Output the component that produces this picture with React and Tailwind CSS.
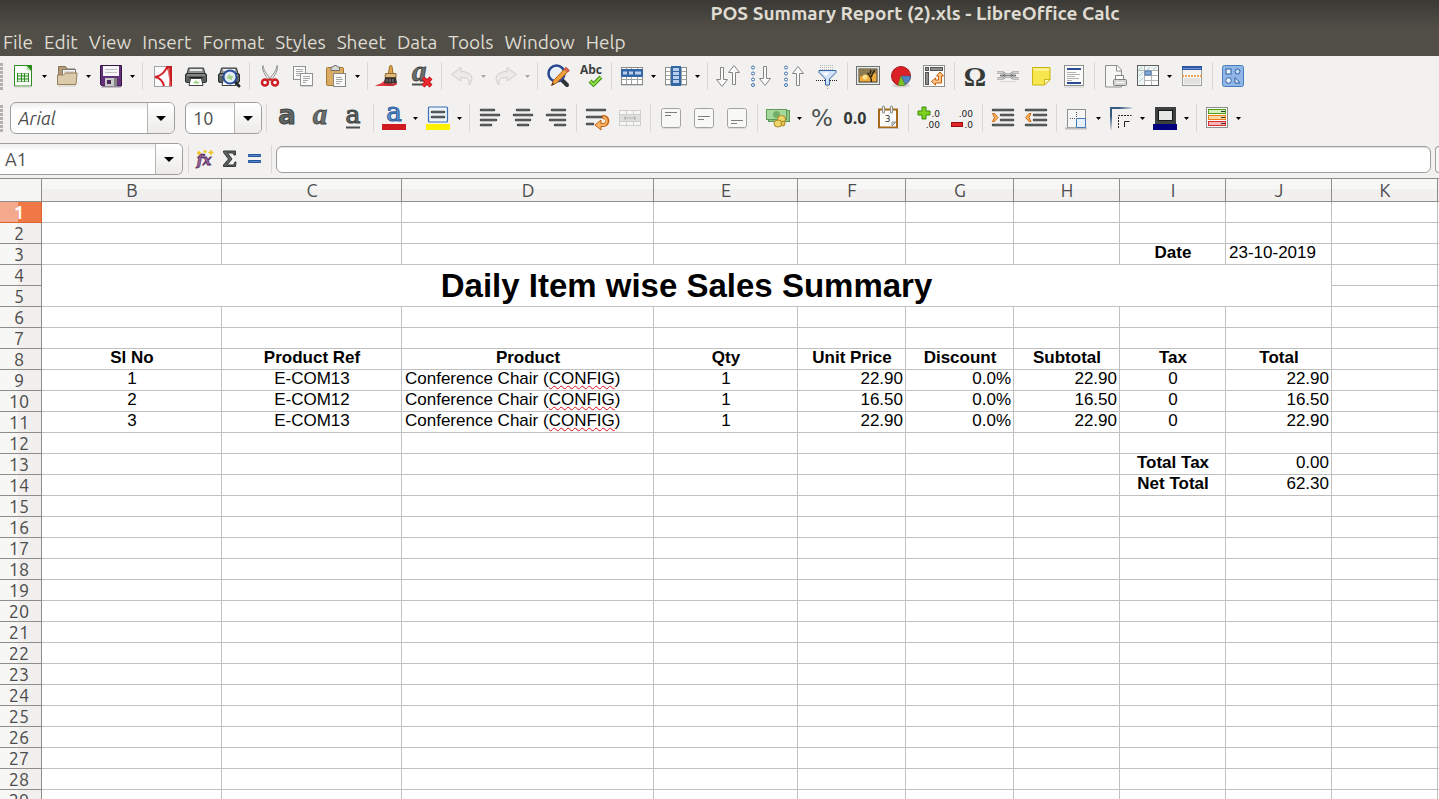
import React from "react";

const Svg = ({ children }) => (
  <svg viewBox="0 0 24 24" className="size-6 shrink-0 overflow-visible" aria-hidden="true">
    {children}
  </svg>
);

const sans = "'DejaVu Sans', sans-serif";
const serif = "'DejaVu Serif', serif";
const roman = "'Liberation Serif', serif";

const lines = (rows) =>
  rows.map(([x1, x2, y], i) => (
    <g key={i} strokeLinecap="round">
      <path d={`M${x1} ${y}H${x2}`} stroke="#3a3f3e" strokeWidth="2.500" />
      <path d={`M${x1} ${y}H${x2}`} stroke="#7d8280" strokeWidth=".8" />
    </g>
  ));

const printer = (
  <>
    <path d="M4.500 4h15l1.500 6H3z" fill="#8f9391" stroke="#2f3332" />
    <path d="M6 6h12" stroke="#e9ebea" strokeWidth="2" />
    <rect x="1.500" y="9.500" width="21" height="9" rx="1.500" fill="#5b605e" stroke="#2b2f2e" />
    <path d="M3 11h18" stroke="#a9adab" strokeWidth="1" />
    <path d="M5 14h14v-1H5z" fill="#1d201f" />
    <path d="M6.500 14.500h11l1.500 7H5z" fill="#fff" stroke="#3c403e" />
    <path d="M9 19l3-3 1 2 3-1-2 3z" fill="#a4d48b" />
  </>
);

const sheetGrid = (
  <>
    <rect x="1.500" y="3.500" width="21" height="17" fill="#fff" stroke="#8a8d8a" />
    <path d="M2 7.500h20M2 11.500h20M2 15.500h20M6.500 4v16M11.500 4v16M17.500 4v16" stroke="#a0a3a0" />
    <path d="M1 21.500h22" stroke="#cfcfcd" />
  </>
);

const alignBox = (y) => (
  <>
    <rect x="2.500" y="2.500" width="19" height="19" rx="2" fill="#f8f8f7" stroke="#a2a4a2" />
    <path d="M3.500 22.500h17" stroke="#dcdcda" />
    <path d={`M6 ${y}.500h12M6 ${y + 3}.500h6`} stroke="#7c7f7c" />
  </>
);

const arrowDown = "M4.500 2.500v12H.5L6 21.500l5.500-7H7.500v-12z";
const arrowUp = "M4.500 21.500v-12H.5L6 2.500l5.500 7H7.500v12z";
const dots = [3.5, 9.5, 15.5, 21].map((y) => (
  <circle key={y} cx="4" cy={y} r="1.500" fill="#fff" stroke="#3d70b0" />
));

const Icons = {
  new: (
    <>
      <path d="M3.500 1.500h13l4 4.500v16h-17z" fill="#fcfdfc" stroke="#2f8a22" />
      <path d="M15 1h6v7z" fill="#2a8a1c" />
      <path d="M15.500 2l4.500 5-4.500-1z" fill="#b9e3a9" />
      <rect x="6" y="9" width="12" height="9" fill="#2f8a22" />
      <path d="M7 10.500h3M11 10.500h2M14 10.500h3M7 13.500h3M11 13.500h2M14 13.500h3M7 16.500h3M11 16.500h2M14 16.500h3" stroke="#e8f7e3" strokeWidth="2" />
      <path d="M4 23h16" stroke="#cfd3ce" />
    </>
  ),
  open: (
    <>
      <path d="M3.500 19V2.500h7l2 2.500h7.500v5" fill="#b49a78" stroke="#8a7350" />
      <path d="M7.500 11V5.500h13V11" fill="#f7f7f5" stroke="#74776f" />
      <path d="M9 8h10" stroke="#b9bab5" />
      <path d="M2.500 20.500v-9.500h6l2-2h11.500l-1 11.500z" fill="#dccbaa" stroke="#977f5b" />
      <path d="M3 22h18" stroke="#cfccc6" />
    </>
  ),
  save: (
    <>
      <path d="M1.500 1.500h21v20.500H3l-1.500-1.500z" fill="#63307a" stroke="#361545" />
      <rect x="4" y="2" width="16" height="10" fill="#f6f5f7" />
      <path d="M6 5.500h12M6 8.500h12" stroke="#c4c2c6" />
      <rect x="6" y="14" width="12" height="8" fill="#c9cbc9" />
      <path d="M15 14h3v8h-3z" fill="#828583" />
      <rect x="8" y="16" width="4" height="4" fill="#4a2a5a" />
      <path d="M2 23.500h20" stroke="#c5c2c6" />
    </>
  ),
  pdf: (
    <>
      <rect x="3.500" y="2.500" width="17" height="20" fill="#fbfbfb" stroke="#a1a3a1" />
      <path d="M15 2h6v20h-3c1-7 0-13-3-20z" fill="#c81c22" />
      <path d="M16 3c-2 5-6 9-12 10 5 1 8 4 9 9" fill="none" stroke="#d21f26" strokeWidth="2" />
      <path d="M18 4c-1 5 1 12 1 18" stroke="#f08a8a" fill="none" />
    </>
  ),
  print: printer,
  preview: (
    <>
      {printer}
      <path d="M17 17l5 5" stroke="#26282a" strokeWidth="3" strokeLinecap="round" />
      <circle cx="13" cy="13" r="6.500" fill="#e4eef5" stroke="#2b4f9c" strokeWidth="2" />
      <path d="M9.500 14l3-4 1 2 3 0-2 4z" fill="#a3d487" />
    </>
  ),
  cut: (
    <>
      <path d="M5 1.500c0 4 4 9 8 14l-2 1C7 11 3.500 6 5 1.500z" fill="#f4f4f3" stroke="#8c8f8c" />
      <path d="M19 1.500c0 4-4 9-8 14l2 1c4-5.500 7.500-10.500 6-15z" fill="#f4f4f3" stroke="#8c8f8c" />
      <circle cx="7" cy="18.500" r="3" fill="#fff" stroke="#cc1f24" strokeWidth="2.500" />
      <circle cx="17" cy="18.500" r="3" fill="#fff" stroke="#cc1f24" strokeWidth="2.500" />
      <path d="M10 15.500h4" stroke="#cc1f24" strokeWidth="2" />
    </>
  ),
  copy: (
    <>
      <rect x="2.500" y="2.500" width="12" height="13" fill="#fbfbfb" stroke="#8f928f" />
      <path d="M5 5.500h7M5 7.500h7M5 9.500h5M5 11.500h6" stroke="#a5a8a5" />
      <rect x="9.500" y="9.500" width="12" height="12" fill="#fbfbfb" stroke="#8f928f" />
      <path d="M12 12.500h7M12 14.500h7M12 16.500h5M12 18.500h3" stroke="#a5a8a5" />
      <path d="M10 22.500h12" stroke="#d0d0ce" />
    </>
  ),
  paste: (
    <>
      <rect x="2.500" y="3.500" width="17" height="18" rx="1" fill="#dbab62" stroke="#a5762f" />
      <path d="M7 6.500V3h2l1-1.500h2.500L13.500 3h2v3.500z" fill="#d7d9d7" stroke="#6e716e" />
      <rect x="9.500" y="9.500" width="12" height="13" fill="#fbfbfb" stroke="#868986" />
      <path d="M12 13.500h6M12 15.500h7M12 17.500h6M12 19.500h4" stroke="#a5a8a5" />
    </>
  ),
  brush: (
    <>
      <path d="M-1 22c3-2 7-2 10-6l10 5c-1 1-4 1-6 1z" fill="#e23a40" />
      <path d="M12.500 10l1-7.500c.5-1.500 2-1.500 2.500 0l1 7.500z" fill="#e3a74b" stroke="#9a6619" />
      <path d="M9.500 9.500h10.500v4H9z" fill="#e0ba7d" stroke="#8d6b32" />
      <path d="M9 13.500h11l1 6H8z" fill="#33302f" />
      <path d="M8.500 19.500c3 2 9 2 12 0" stroke="#c8262c" strokeWidth="2" fill="none" />
      <path d="M11 15v3M14 15v3M17 15v3" stroke="#8d8a88" />
    </>
  ),
  clear: (
    <>
      <text x="3" y="17" fontFamily={roman} fontStyle="italic" fontWeight="700" fontSize="29" fill="#6a6f6d" stroke="#3a3e3d" strokeWidth=".8">a</text>
      <path d="M3 20.500h11" stroke="#4e5351" strokeWidth="2" />
      <path d="M14 14l8 8M22 14l-8 8" stroke="#a5070b" strokeWidth="4" />
      <path d="M14 14l8 8M22 14l-8 8" stroke="#f02b2f" strokeWidth="2.500" />
    </>
  ),
  undo: <path d="M11 3.500l-9.500 7 9.500 6.500v-3.500c6 0 9 1 8 7.500 5-6 4-13-8-13.500z" fill="#eceae8" stroke="#cfcdca" />,
  redo: <path d="M13 3.500l9.500 7-9.500 6.500v-3.500c-6 0-9 1-8 7.500-5-6-4-13 8-13.500z" fill="#eceae8" stroke="#cfcdca" />,
  find: (
    <>
      <path d="M15 15l6 6" stroke="#303335" strokeWidth="4" strokeLinecap="round" />
      <circle cx="10.500" cy="9.500" r="8" fill="#e9f0f7" stroke="#27468f" strokeWidth="2.500" />
      <path d="M5.500 21.500l2-5L20 3.500l3 3L10.500 19z" fill="#f0a13c" stroke="#b35d12" />
      <path d="M18.500 5l1.500-1.500 3 3L21.500 8z" fill="#e4716b" stroke="#b8423c" />
      <path d="M5.500 21.500l1-3 2 2z" fill="#4a3420" />
    </>
  ),
  spell: (
    <>
      <text x="12" y="10" textAnchor="middle" fontFamily="'Open Sans', sans-serif" fontWeight="700" fontSize="12" fill="#3b3f3e">Abc</text>
      <path d="M11 17l3.500 3.500L22 13" fill="none" stroke="#3f8a12" strokeWidth="4" />
      <path d="M11 17l3.500 3.500L22 13" fill="none" stroke="#8fe04a" strokeWidth="2" />
    </>
  ),
  row: (
    <>
      {sheetGrid}
      <rect x="1" y="5" width="22" height="8" fill="#3465a4" />
      <path d="M3 9h4M9 9h4M15 9h6" stroke="#b8d0ee" strokeWidth="3" />
    </>
  ),
  col: (
    <>
      {sheetGrid}
      <rect x="7" y="2" width="10" height="20" fill="#3465a4" />
      <path d="M9 5.500h6M9 9.500h6M9 13.500h6M9 17.500h6" stroke="#b8d0ee" strokeWidth="3" />
    </>
  ),
  sort: (
    <>
      <path d={arrowDown} fill="#fafafa" stroke="#858885" transform="translate(0 1)" />
      <path d={arrowUp} fill="#fafafa" stroke="#858885" transform="translate(12 -1)" />
    </>
  ),
  asc: (
    <>
      {dots}
      <path d={arrowDown} fill="#fafafa" stroke="#858885" transform="translate(10 0)" />
    </>
  ),
  desc: (
    <>
      {dots}
      <path d={arrowUp} fill="#fafafa" stroke="#858885" transform="translate(10 0)" />
    </>
  ),
  filter: (
    <>
      <path d="M5 1.500h14M5 3.500h14M5 5.500h14" stroke="#b9bbb9" strokeDasharray="1 1" />
      <path d="M1 16.500h22" stroke="#222" strokeDasharray="1 1" />
      <path d="M4 6.500h17v2l-6.500 6.500v6h-4v-6L4 8.500z" fill="#cfe2f6" stroke="#3465a4" />
      <path d="M7 8.500h7l-3 4z" fill="#fff" />
      <path d="M12.500 22v3" stroke="#9a9c9a" strokeDasharray="1 1" />
    </>
  ),
  image: (
    <>
      <rect x=".5" y="2.500" width="23" height="18" fill="#e9eae8" stroke="#6f736f" />
      <rect x="3" y="5" width="18" height="13" fill="#f0ab3d" stroke="#3f3c32" />
      <path d="M3.500 5.500h17v4c-5 0-9 2-17 3z" fill="#8d7a52" />
      <circle cx="9" cy="13" r="2.500" fill="#fbe08a" />
      <path d="M15.500 18c0-4-1-6-4-9M15.500 13c0-3 2-4 3-7M14 10l1-4" stroke="#2e2413" strokeWidth="1.500" fill="none" />
    </>
  ),
  pie: (
    <>
      <ellipse cx="12" cy="21.500" rx="9" ry="2" fill="#d5d4d2" />
      <circle cx="12" cy="12" r="9.500" fill="#dc2126" stroke="#a8161a" />
      <path d="M12 12h9.500a9.500 9.500 0 0 1-5.500 8.600z" fill="#4f83c4" stroke="#2f5b96" strokeWidth=".5" />
      <path d="M12 12l4 9a9.500 9.500 0 0 1-7 0z" fill="#7cc42e" stroke="#4d8a14" strokeWidth=".5" />
    </>
  ),
  pivot: (
    <>
      <rect x="1.500" y="1.500" width="21" height="21" fill="#fbfbfa" stroke="#8d908d" />
      <rect x="3.500" y="3.500" width="3" height="3" fill="#8d908d" stroke="#555" />
      <rect x="8.500" y="3.500" width="12" height="3" fill="#8d908d" stroke="#555" />
      <rect x="3.500" y="8.500" width="3" height="12" fill="#8d908d" stroke="#555" />
      <path d="M9.500 17.500l4-3.500v2h3v-4h-2l3.500-4 3.500 4h-2v7h-6v2z" fill="#fbc58a" stroke="#c8610c" />
    </>
  ),
  omega: <text x="12" y="22" textAnchor="middle" fontFamily={roman} fontWeight="700" fontSize="28" fill="#363b3a">Ω</text>,
  link: (
    <>
      <path d="M1 8.500h6l3 2h4l3-2h6M1 14.500h6l3-2h4l3 2h6M4 11.500h5M15 11.500h5" stroke="#7b7f7c" strokeWidth="2" fill="none" />
      <path d="M1 8.500h6l3 2h4l3-2h6M1 14.500h6l3-2h4l3 2h6" stroke="#e4e5e3" strokeWidth=".8" fill="none" />
      <path d="M4 17.500h16" stroke="#d8d7d5" />
    </>
  ),
  note: (
    <>
      <path d="M3.500 3.500h17.500v12l-5.500 5.500h-12z" fill="#f8e64f" stroke="#cdb413" />
      <path d="M4.500 4.500h15.500v2H4.500z" fill="#fdf6a8" />
      <path d="M15.500 21v-5.500H21z" fill="#fffbd0" stroke="#cdb413" />
    </>
  ),
  headfoot: (
    <>
      <rect x="2.500" y="1.500" width="19" height="20" fill="#fbfbfa" stroke="#8d908d" />
      <path d="M5 5h14M5 19h14" stroke="#2c4c92" strokeWidth="2" />
      <path d="M5 8.500h9M5 10.500h13M5 12.500h8M5 14.500h12M5 16.500h5" stroke="#b2b4b2" />
      <path d="M2 23h20" stroke="#cfcfcd" />
    </>
  ),
  printarea: (
    <>
      <path d="M2.500 1.500h12l4 4.500v17h-16z" fill="#f6f6f5" stroke="#8d908d" />
      <path d="M13.500 1.500v5.500h5" fill="#fff" stroke="#8d908d" />
      <path d="M12.500 16v-4.500h8V16" fill="#fff" stroke="#7f827f" />
      <rect x="10.500" y="15.500" width="13" height="6" rx="1" fill="#d5d7d5" stroke="#7f827f" />
      <path d="M13 18.500h8" stroke="#fff" />
    </>
  ),
  freeze: (
    <>
      <rect x="1.500" y="1.500" width="21" height="20" fill="#fff" />
      <path d="M2 2h20v5H2zM2 7h6v14H2z" fill="#eef5f6" />
      <path d="M3 6l3-3M3 12l4-4M3 18l4-4M11 6l3-3M17 6l3-3" stroke="#a9cbc9" />
      <path d="M8.500 2v19M15.500 7v14M2 6.500h20M8 11.500h14M8 16.500h14" stroke="#b4b7b4" />
      <rect x="9" y="7" width="6" height="4" fill="#86abd8" stroke="#3b6aa8" strokeWidth=".8" />
      <rect x="1.500" y="1.500" width="21" height="20" fill="none" stroke="#5c5f5c" />
    </>
  ),
  split: (
    <>
      <rect x="2.500" y="2.500" width="19" height="19" fill="#f4f4f3" stroke="#9a9d9a" />
      <rect x="2" y="2" width="20" height="4" fill="#2f56a3" />
      <path d="M3 4.500h18" stroke="#6d94d4" />
      <path d="M2 12h20" stroke="#ee8a2a" strokeWidth="1.500" strokeDasharray="2 1" />
      <path d="M4 14h16v6H4z" fill="#e2e2e0" />
    </>
  ),
  shapes: (
    <>
      <rect x="1.500" y="1.500" width="21" height="21" rx="2" fill="#8fb6e6" stroke="#4a7dbd" />
      <rect x="5" y="5" width="5" height="5" fill="#e8f1fb" stroke="#2f5fa0" />
      <circle cx="16.500" cy="7.500" r="2.500" fill="#c3d9f3" stroke="#2f5fa0" />
      <circle cx="7.500" cy="16.500" r="2.800" fill="#e8f1fb" stroke="#2f5fa0" />
      <path d="M14 13.500l5 5.500h-5z" fill="#e8f1fb" stroke="#2f5fa0" />
    </>
  ),
  bold: <text x="12" y="18" textAnchor="middle" fontFamily={sans} fontWeight="700" fontSize="26" fill="#626765" stroke="#3c4140" strokeWidth="1">a</text>,
  italic: <text x="12" y="18" textAnchor="middle" fontFamily={roman} fontStyle="italic" fontWeight="700" fontSize="29" fill="#6a6f6d" stroke="#3f4443" strokeWidth=".8">a</text>,
  underline: (
    <>
      <text x="12" y="17" textAnchor="middle" fontFamily={serif} fontSize="25" fill="#6a6f6d" stroke="#454a49" strokeWidth="1.200">a</text>
      <path d="M5 21.500h14" stroke="#4a4f4e" strokeWidth="2" />
    </>
  ),
  fontcolor: (
    <>
      <text x="12" y="15" textAnchor="middle" fontFamily={serif} fontSize="26" fill="#6d9fdb" stroke="#3465a4" strokeWidth="1.200">a</text>
      <rect x="0" y="18" width="24" height="6" fill="#cf1b20" />
    </>
  ),
  highlight: (
    <>
      <rect x="2.500" y="1" width="19" height="15" rx="1" fill="#eef4fb" stroke="#3a6fb5" strokeWidth="1.200" />
      {lines([[6, 18, 6], [6, 18, 11]])}
      <rect x="0" y="18" width="24" height="6" fill="#fff200" />
    </>
  ),
  left: lines([[3, 16, 4], [3, 21, 9], [3, 18, 14], [3, 13, 19]]),
  center: lines([[6, 18, 4], [3, 21, 9], [5, 19, 14], [7, 17, 19]]),
  right: lines([[8, 21, 4], [3, 21, 9], [6, 21, 14], [11, 21, 19]]),
  wrap: (
    <>
      {lines([[2, 20, 4], [2, 16, 11], [2, 8, 18]])}
      <path d="M17 11c7-1 7 8 1 8h-3" fill="none" stroke="#c4620e" strokeWidth="4" />
      <path d="M16 14l-6 5 6 5z" fill="#f9b66b" stroke="#c4620e" />
      <path d="M18 11.200c5-.2 5 7.800 0 7.800h-3" fill="none" stroke="#f9b66b" strokeWidth="2" />
    </>
  ),
  merge: (
    <>
      <rect x="1.500" y="4.500" width="21" height="15" fill="#f6f6f5" stroke="#cfcfcd" />
      <path d="M2 8.500h20M2 15.500h20M8.500 5v4M15.500 5v4M8.500 15v4M15.500 15v4" stroke="#cfcfcd" />
      <rect x="2" y="9" width="20" height="6" fill="#dededc" />
      <path d="M6 12h12M8 10l-2 2 2 2M16 10l2 2-2 2" stroke="#b2b4b2" fill="none" />
    </>
  ),
  top: alignBox(6),
  middle: alignBox(10),
  bottom: alignBox(14),
  currency: (
    <>
      <rect x="2.500" y="4.500" width="21" height="11" fill="#8fc687" stroke="#5c9a55" />
      <rect x=".5" y="3.500" width="20" height="10" fill="#a6d89e" stroke="#5c9a55" />
      <circle cx="10.500" cy="8.500" r="3.500" fill="#72b069" />
      <ellipse cx="15.500" cy="13" rx="4" ry="3.500" fill="#f0d56f" stroke="#a98a1e" />
      <ellipse cx="12" cy="17.500" rx="4" ry="3.500" fill="#f0d56f" stroke="#a98a1e" />
      <ellipse cx="17" cy="17.500" rx="2" ry="2.500" fill="#e3c450" stroke="#a98a1e" />
    </>
  ),
  percent: <text x="12" y="20" textAnchor="middle" fontFamily={sans} fontSize="23" fill="#4b504f">%</text>,
  decimal: <text x="12" y="18" textAnchor="middle" fontFamily="'Open Sans', sans-serif" fontWeight="700" fontSize="16" fill="#343837">0.0</text>,
  date: (
    <>
      <rect x="3" y="3.500" width="18" height="18" fill="#fbfbfa" stroke="#a8691a" strokeWidth="2" />
      <path d="M3 22.500h20" stroke="#c7c6c4" />
      <path d="M7.500 1v5M15.500 1v5" stroke="#8b8e8b" strokeWidth="3" strokeLinecap="round" />
      <path d="M7.500 1v5M15.500 1v5" stroke="#f3f3f2" strokeLinecap="round" />
      <text x="11.500" y="16" textAnchor="middle" fontFamily={sans} fontSize="9" fill="#333">3</text>
      <path d="M16 20v-4h4z" fill="#d2d2d0" stroke="#90938f" />
    </>
  ),
  adddec: (
    <>
      <path d="M5 1h4v4h4v4H9v4H5V9H1V5h4z" fill="#7fd11f" stroke="#3c8a0b" />
      <text x="23" y="11" textAnchor="end" fontFamily={sans} fontSize="9" fill="#222">.0</text>
      <text x="23" y="22" textAnchor="end" fontFamily={sans} fontSize="9" fill="#222">.00</text>
    </>
  ),
  deldec: (
    <>
      <text x="23" y="11" textAnchor="end" fontFamily={sans} fontSize="9" fill="#222">.00</text>
      <text x="23" y="22" textAnchor="end" fontFamily={sans} fontSize="9" fill="#222">.0</text>
      <rect x="1.500" y="16.500" width="11" height="4" fill="#e0252b" stroke="#9c0d12" />
    </>
  ),
  indent: (
    <>
      {lines([[2, 22, 4], [10, 22, 9], [10, 22, 14], [2, 22, 19]])}
      <path d="M1.500 7.500h2l3.500 4-3.500 4h-2l2-4z" fill="#fbb45f" stroke="#cf6a10" />
    </>
  ),
  outdent: (
    <>
      {lines([[2, 22, 4], [10, 22, 9], [10, 22, 14], [2, 22, 19]])}
      <path d="M7 7.500H5l-3.500 4 3.500 4h2l-2-4z" fill="#fbb45f" stroke="#cf6a10" />
    </>
  ),
  borders: (
    <>
      <rect x="2.500" y="3.500" width="18" height="18" fill="#f5f6f5" stroke="#8d908d" />
      <path d="M0 22.500h22" stroke="#bdbdbb" strokeWidth="2" />
      <path d="M11.500 6v6M5 12.500h6" stroke="#555" strokeDasharray="1 1" />
      <path d="M11.500 12.500h9v9h-9z" fill="#e6effa" stroke="#4478bd" />
    </>
  ),
  borderstyle: (
    <>
      <defs>
        <linearGradient id="fadeRight" gradientUnits="userSpaceOnUse" x1="10" y1="0" x2="23" y2="0">
          <stop stopColor="#35597f" />
          <stop offset="1" stopColor="#35597f" stopOpacity=".15" />
        </linearGradient>
        <linearGradient id="fadeDown" gradientUnits="userSpaceOnUse" x1="0" y1="10" x2="0" y2="24">
          <stop stopColor="#35597f" />
          <stop offset="1" stopColor="#35597f" stopOpacity=".1" />
        </linearGradient>
      </defs>
      <path d="M1 1h22v2H1z" fill="url(#fadeRight)" />
      <path d="M1 3h2v21H1z" fill="url(#fadeDown)" />
      <path d="M9.500 22V9.500h13" fill="none" stroke="#222" strokeDasharray="2 1" />
      <path d="M15.500 21v-5.500h5" fill="none" stroke="#222" />
    </>
  ),
  bordercolor: (
    <>
      <rect x="3.500" y="2.500" width="18" height="14" fill="#e6e8e6" stroke="#3c4140" strokeWidth="3" />
      <rect x="5.500" y="4.500" width="14" height="10" fill="none" stroke="#151717" />
      <rect x="0" y="18" width="24" height="6" fill="#00007f" />
    </>
  ),
  conditional: (
    <>
      <rect x="1.500" y="1.500" width="21" height="20" fill="#fbfbfa" stroke="#8d908d" />
      <rect x="3.500" y="3.500" width="17" height="4" fill="#d3f0bd" stroke="#4f9f1b" />
      <rect x="3.500" y="9.500" width="17" height="4" fill="#fbd7a6" stroke="#e97f10" />
      <rect x="3.500" y="15.500" width="17" height="4" fill="#f5b5b5" stroke="#d92b2f" />
      <path d="M16 5.500h4M16 11.500h4M16 17.500h4" stroke="#333" />
    </>
  ),
  fx: (
    <>
      <text x="11" y="18" textAnchor="middle" fontFamily={serif} fontStyle="italic" fontWeight="700" fontSize="14" fill="#9a6aa0" stroke="#5a2d62" strokeWidth=".8">fx</text>
      <path d="M6 4v4M4 6h4M12 3v3M10.500 4.500h3M18 3v5M15.500 5.500h5" stroke="#edc21b" strokeWidth="1.500" />
    </>
  ),
  sum: <path d="M5.500 4h12v4H16l-1-2H9.500l4.500 6-5 6h6.500l1.500-3h1l-.5 4.500h-12V18L10.500 12l-5-6.500z" fill="#5d6260" stroke="#343938" />,
  equals: <path d="M5.500 7.500h12v2h-12zM5.500 13.500h12v2h-12z" fill="#5488cc" stroke="#24549c" />,
};

const SEP = "|";
const standardBar = [
  ["new", "New", 1], ["open", "Open", 1], ["save", "Save", 1], SEP,
  ["pdf", "Export as PDF"], ["print", "Print"], ["preview", "Print Preview"], SEP,
  ["cut", "Cut"], ["copy", "Copy"], ["paste", "Paste", 1], SEP,
  ["brush", "Clone Formatting"], ["clear", "Clear Formatting"], SEP,
  ["undo", "Undo", 2], ["redo", "Redo", 2], SEP,
  ["find", "Find & Replace"], ["spell", "Spelling"], SEP,
  ["row", "Row", 1], ["col", "Column", 1], SEP,
  ["sort", "Sort"], ["asc", "Sort Ascending"], ["desc", "Sort Descending"], ["filter", "AutoFilter"], SEP,
  ["image", "Insert Image"], ["pie", "Insert Chart"], ["pivot", "Pivot Table"], SEP,
  ["omega", "Special Character"], ["link", "Hyperlink"], ["note", "Insert Comment"], ["headfoot", "Headers and Footers"], SEP,
  ["printarea", "Define Print Area"], ["freeze", "Freeze Rows and Columns", 1], ["split", "Split Window"], SEP,
  ["shapes", "Show Draw Functions"],
];

const formatBar = [
  SEP, ["bold", "Bold"], ["italic", "Italic"], ["underline", "Underline"], SEP,
  ["fontcolor", "Font Color", 1], ["highlight", "Background Color", 1], SEP,
  ["left", "Align Left"], ["center", "Center Horizontally"], ["right", "Align Right"], SEP,
  ["wrap", "Wrap Text"], ["merge", "Merge Cells"], SEP,
  ["top", "Align Top"], ["middle", "Center Vertically"], ["bottom", "Align Bottom"], SEP,
  ["currency", "Currency", 1], ["percent", "Percent"], ["decimal", "Number"], ["date", "Date"], SEP,
  ["adddec", "Add Decimal Place"], ["deldec", "Delete Decimal Place"], SEP,
  ["indent", "Increase Indent"], ["outdent", "Decrease Indent"], SEP,
  ["borders", "Borders", 1], ["borderstyle", "Border Style", 1], ["bordercolor", "Border Color", 1], SEP,
  ["conditional", "Conditional Formatting", 1],
];

const Separator = () => (
  <span className="flex w-2 shrink-0 justify-center">
    <span className="h-7 w-px bg-[#d9d7d5]" />
  </span>
);

const Caret = ({ muted }) => (
  <svg viewBox="0 0 5 3" className="h-[3px] w-[5px]" aria-hidden="true">
    <path d="M0 0h5L2.500 3z" fill={muted ? "#a9a7a4" : "#000"} />
  </svg>
);

const ToolButton = ({ icon, label, menu }) => (
  <>
    <button type="button" aria-label={label} className="flex h-9 w-[33px] shrink-0 items-center justify-center">
      <Svg>{Icons[icon]}</Svg>
    </button>
    {menu && (
      <button type="button" aria-label={`${label} options`} className="flex h-9 w-[11px] shrink-0 items-center justify-center">
        <Caret muted={menu === 2} />
      </button>
    )}
  </>
);

const Tools = ({ items }) =>
  items.map((it, i) =>
    it === SEP ? <Separator key={i} /> : <ToolButton key={i} icon={it[0]} label={it[1]} menu={it[2]} />
  );

const Grip = () => (
  <span className="h-[27px] w-[3px] shrink-0 bg-[repeating-linear-gradient(#b3b1ae_0_3px,#f2f1f0_3px_4px)]" />
);

const BigCaret = () => (
  <svg viewBox="0 0 10 5" className="h-[5px] w-[10px]" aria-hidden="true">
    <path d="M0 0h10L5 5z" fill="#000" />
  </svg>
);

const boxClass =
  "relative flex h-8 shrink-0 overflow-hidden rounded-md border border-[#a09e9b] bg-linear-to-b from-[#efefee] to-white to-25%";
const arrowClass =
  "flex w-[27px] shrink-0 items-center justify-center border-l border-[#b8b6b3] bg-linear-to-b from-white to-[#ecebe9]";

const Combo = ({ label, value, className, textClass }) => (
  <div className={`${boxClass} ${className}`}>
    <select aria-label={label} defaultValue={value} className={`min-w-0 flex-1 appearance-none bg-transparent pl-[7px] text-[18px] text-[#4c4c4c] outline-none ${textClass}`}>
      <option>{value}</option>
    </select>
    <span className={`pointer-events-none ${arrowClass}`}>
      <BigCaret />
    </span>
  </div>
);

const menus = ["File", "Edit", "View", "Insert", "Format", "Styles", "Sheet", "Data", "Tools", "Window", "Help"];
const columns = ["B", "C", "D", "E", "F", "G", "H", "I", "J", "K"];

const head = (t) => ({ t, c: "text-center font-bold" });
const mid = (t) => ({ t, c: "text-center" });
const num = (t) => ({ t, c: "text-right" });
const chair = {
  c: "text-left",
  t: (
    <>
      Conference Chair (
      <span className="underline decoration-[#e0101a] decoration-wavy decoration-1 underline-offset-1">CONFIG</span>)
    </>
  ),
};
const sale = (no, ref, price) => ({
  B: mid(no), C: mid(ref), D: chair, E: mid("1"), F: num(price), G: num("0.0%"), H: num(price), I: mid("0"), J: num(price),
});

const cells = {
  3: { I: head("Date"), J: { t: "23-10-2019", c: "text-left" } },
  8: {
    B: head("Sl No"), C: head("Product Ref"), D: head("Product"), E: head("Qty"), F: head("Unit Price"),
    G: head("Discount"), H: head("Subtotal"), I: head("Tax"), J: head("Total"),
  },
  9: sale("1", "E-COM13", "22.90"),
  10: sale("2", "E-COM12", "16.50"),
  11: sale("3", "E-COM13", "22.90"),
  13: { I: head("Total Tax"), J: num("0.00") },
  14: { I: head("Net Total"), J: num("62.30") },
};

const rowNumbers = Array.from({ length: 29 }, (_, i) => i + 1);
const cellBase = "h-[21px] overflow-hidden border-r border-b border-[#c0c0c0] pr-[2px] pl-[3px] py-0 align-top leading-[18px] whitespace-nowrap";

const Row = ({ n }) => (
  <tr>
    <th
      scope="row"
      className={
        n === 1
          ? "h-[21px] border-r border-b border-[#d9622f] bg-[linear-gradient(90deg,#f5a98c_18px,#f07746_18px)] p-0 pr-[3px] text-[18px] leading-5 font-bold text-white"
          : "h-[21px] border-r border-b border-[#8f8d8b] bg-[linear-gradient(90deg,#f7f7f6_18px,#f1f0ef_18px)] p-0 pr-[3px] text-[18px] leading-5 font-normal text-[#4c4c4c]"
      }
    >
      {n}
    </th>
    {n === 4 && (
      <td colSpan={9} rowSpan={2} className="border-r border-b border-[#c0c0c0] p-0 text-center font-['Liberation_Sans',Arial,sans-serif] text-[33px] leading-[38px] font-bold text-black">
        Daily Item wise Sales Summary
      </td>
    )}
    {(n === 4 || n === 5 ? ["K"] : columns).map((c) => {
      const cell = cells[n]?.[c];
      return (
        <td key={c} className={`${cellBase} font-['Liberation_Sans',Arial,sans-serif] text-[17px] text-black ${cell ? cell.c : ""}`}>
          {cell?.t}
        </td>
      );
    })}
    <td className="border-b border-[#c0c0c0] p-0" />
  </tr>
);

export default function App() {
  return (
    <div className="flex h-screen flex-col overflow-hidden bg-[#f2f1f0] font-['Ubuntu','Noto_Sans',sans-serif]">
      <header className="shrink-0 bg-linear-to-b from-[#3a3935] to-[#504e46] to-50% text-[#dfdbd2]">
        <h1 className="h-7 pl-[391px] text-center text-[19px] leading-[27px] font-bold">
          POS Summary Report (2).xls - LibreOffice Calc
        </h1>
        <nav aria-label="Menu bar" className="flex h-7 items-center gap-[11px] pl-[3px]">
          {menus.map((m) => (
            <button key={m} type="button" className="text-[19px] leading-7">
              {m}
            </button>
          ))}
        </nav>
      </header>

      <div role="toolbar" aria-label="Standard" className="flex h-10 shrink-0 items-center">
        <Grip />
        <div className="flex items-center pl-[3px]">
          <Tools items={standardBar} />
        </div>
      </div>

      <div role="toolbar" aria-label="Formatting" className="flex h-11 shrink-0 items-center">
        <Grip />
        <div className="flex items-center pl-[7px]">
          <Combo label="Font Name" value="Arial" className="mr-[10px] w-[165px]" textClass="italic" />
          <Combo label="Font Size" value="10" className="w-[77px]" textClass="" />
          <Tools items={formatBar} />
        </div>
      </div>

      <div className="flex h-[39px] shrink-0 items-center border-b border-[#8f8d8b]">
        <div className={`${boxClass} w-[183px] rounded-l-none border-l-0`}>
          <input aria-label="Name Box" defaultValue="A1" className="min-w-0 flex-1 bg-transparent pl-[5px] text-[18px] text-[#4c4c4c] outline-none" />
          <button type="button" aria-label="Name Box list" className={arrowClass}>
            <BigCaret />
          </button>
        </div>
        <div className="flex shrink-0 items-center px-px">
          <Separator />
          {[["fx", "Function Wizard"], ["sum", "Sum"], ["equals", "Formula"]].map(([k, l]) => (
            <button key={k} type="button" aria-label={l} className="flex h-9 w-[25px] items-center justify-center">
              <Svg>{Icons[k]}</Svg>
            </button>
          ))}
          <Separator />
        </div>
        <input aria-label="Input line" className="h-[27px] min-w-0 flex-1 rounded-md border border-[#a09e9b] bg-white px-2 shadow-[inset_0_1px_1px_#dddcda] outline-none" />
        <button type="button" aria-label="Expand Formula Bar" className="ml-1 h-[27px] w-1 shrink-0 rounded-l-md border border-r-0 border-[#a09e9b] bg-[#f7f7f6]" />
      </div>

      <main className="min-h-0 flex-1 overflow-hidden bg-white">
        <table className="w-full min-w-[1439px] table-fixed border-separate border-spacing-0">
          <colgroup>
            <col className="w-[42px]" />
            <col className="w-[180px]" />
            <col className="w-[180px]" />
            <col className="w-[252px]" />
            <col className="w-[144px]" />
            <col className="w-[108px]" />
            <col className="w-[108px]" />
            <col className="w-[106px]" />
            <col className="w-[106px]" />
            <col className="w-[106px]" />
            <col className="w-[106px]" />
            <col />
          </colgroup>
          <thead>
            <tr>
              <th aria-label="Select All" className="h-[23px] border-r border-b border-[#8f8d8b] bg-[#f5f5f4] p-0" />
              {columns.map((c) => (
                <th key={c} scope="col" className="h-[23px] border-r border-b border-[#8f8d8b] bg-[linear-gradient(#f7f7f6_10px,#f1f0ef_10px)] p-0 pl-px text-[18px] leading-5 font-normal text-[#4c4c4c]">
                  {c}
                </th>
              ))}
              <th className="border-b border-[#8f8d8b] bg-[#f1f0ef] p-0" />
            </tr>
          </thead>
          <tbody>
            {rowNumbers.map((n) => (
              <Row key={n} n={n} />
            ))}
          </tbody>
        </table>
      </main>
    </div>
  );
}
